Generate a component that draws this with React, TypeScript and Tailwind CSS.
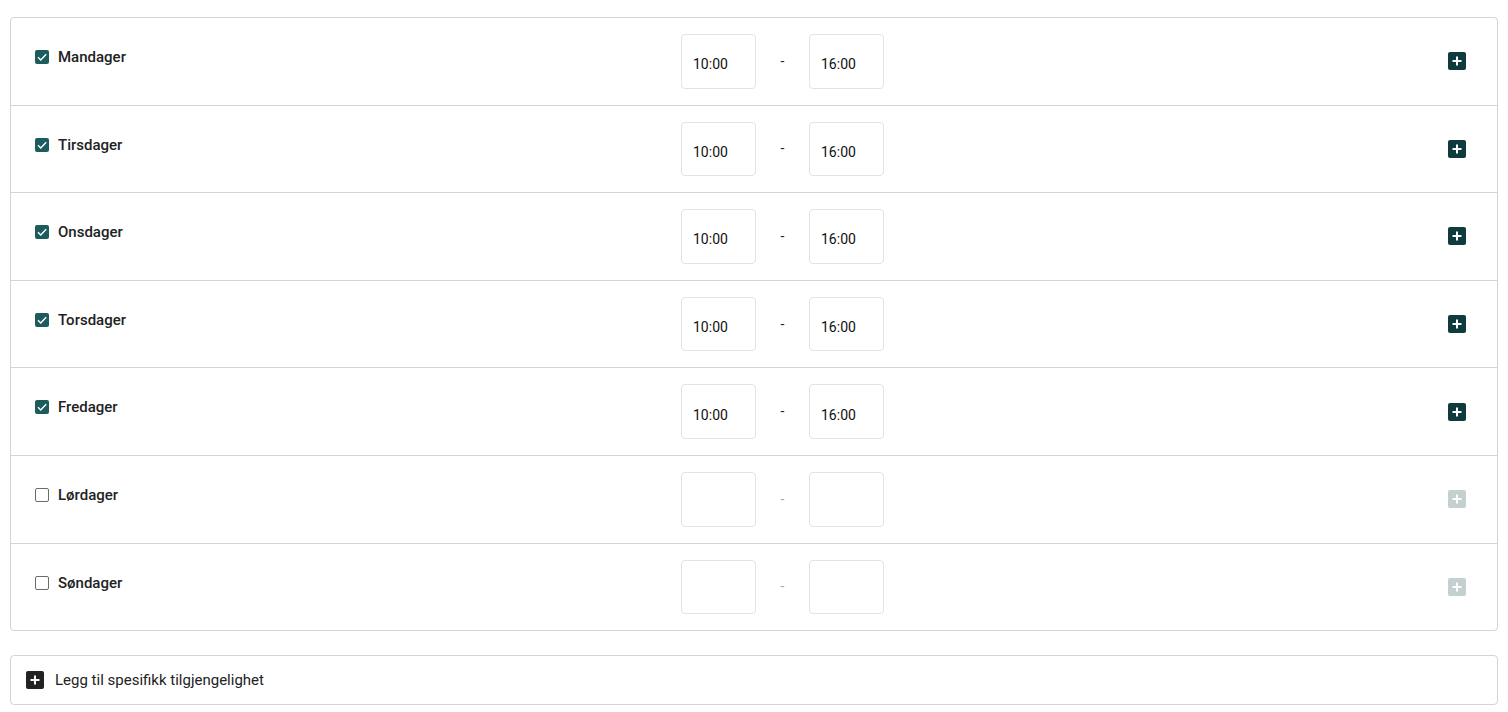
import React, { useState } from 'react';

type Day = { name: string; enabled: boolean; from: string; to: string };

const initialDays: Day[] = [
  { name: 'Mandager', enabled: true, from: '10:00', to: '16:00' },
  { name: 'Tirsdager', enabled: true, from: '10:00', to: '16:00' },
  { name: 'Onsdager', enabled: true, from: '10:00', to: '16:00' },
  { name: 'Torsdager', enabled: true, from: '10:00', to: '16:00' },
  { name: 'Fredager', enabled: true, from: '10:00', to: '16:00' },
  { name: 'Lørdager', enabled: false, from: '', to: '' },
  { name: 'Søndager', enabled: false, from: '', to: '' },
];

const PlusBox: React.FC<{ className: string }> = ({ className }) => (
  <span className={`flex h-[18px] w-[18px] items-center justify-center rounded-[2px] ${className}`}>
    <svg viewBox="0 0 12 12" className="h-[12px] w-[12px]">
      <path d="M6 1.5v9M1.5 6h9" stroke="white" strokeWidth="2" />
    </svg>
  </span>
);

const App: React.FC = () => {
  const [days, setDays] = useState(initialDays);

  const toggle = (i: number) =>
    setDays((d) => d.map((day, idx) => (idx === i ? { ...day, enabled: !day.enabled } : day)));

  return (
    <div className="min-h-screen bg-white px-[10px] pt-[17px] text-[14px] text-[#222]" style={{ fontFamily: 'Roboto, "Liberation Sans", sans-serif' }}>
      <div className="rounded-[4px] border border-[#d4d4d4]">
        {days.map((day, i) => (
          <div
            key={day.name}
            className={`flex items-start py-4 pl-6 pr-[31px] ${i < days.length - 1 ? 'border-b border-[#d4d4d4]' : ''}`}
          >
            <label className="mt-[13px] flex w-[646px] cursor-pointer items-center gap-[9px] leading-5">
              <span
                onClick={() => toggle(i)}
                className={`flex h-[14px] w-[14px] items-center justify-center rounded-[2px] ${
                  day.enabled ? 'bg-[#1d5b5c]' : 'border-[1.5px] border-[#6b6b6b] bg-white'
                }`}
              >
                {day.enabled && (
                  <svg viewBox="0 0 12 12" className="h-[12px] w-[12px]">
                    <path d="M2 6.3l2.7 2.7L10.2 3.2" stroke="white" strokeWidth="1.4" fill="none" />
                  </svg>
                )}
              </span>
              <span className="text-[15px] font-medium text-[#222]">{day.name}</span>
            </label>
            <div className="flex items-center">
              <div className="flex h-[54.6px] w-[75px] items-center rounded-[4px] border border-[#e3e3e3] pl-[11px] pt-[7px] text-[14px] text-[#111]">
                {day.enabled ? day.from : ''}
              </div>
              <span className={`w-[53px] text-center ${day.enabled ? 'text-[#222]' : 'text-[#aaa]'}`}>-</span>
              <div className="flex h-[54.6px] w-[75px] items-center rounded-[4px] border border-[#e3e3e3] pl-[11px] pt-[7px] text-[14px] text-[#111]">
                {day.enabled ? day.to : ''}
              </div>
            </div>
            <div className="flex flex-1 justify-end self-center">
              <PlusBox className={day.enabled ? 'bg-[#0f3b3e]' : 'bg-[#c4cfd0]'} />
            </div>
          </div>
        ))}
      </div>

      <button className="mt-[24px] flex h-[50px] w-full items-center gap-[11px] rounded-[4px] border border-[#d4d4d4] pl-[15px] text-left text-[15px] text-[#222]">
        <PlusBox className="bg-[#222]" />
        <span>Legg til spesifikk tilgjengelighet</span>
      </button>
    </div>
  );
};

export default App;
